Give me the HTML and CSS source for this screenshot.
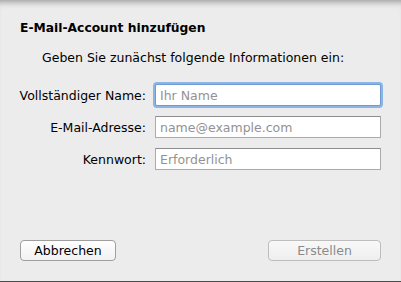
FILE: index.html
```html
<!DOCTYPE html>
<html lang="de">
<head>
    <meta charset="UTF-8">
    <title>E-Mail-Account hinzufügen</title>
    <link rel="stylesheet" href="styles.css">
</head>
<body>
    <div class="sheet">
        <h1 class="sheet-title">E-Mail-Account hinzufügen</h1>
        <p class="sheet-intro">Geben Sie zunächst folgende Informationen ein:</p>

        <form class="account-form">
            <label for="name">Vollständiger Name:</label>
            <input id="name" class="focused" type="text" placeholder="Ihr Name">

            <label for="mail">E-Mail-Adresse:</label>
            <input id="mail" type="text" placeholder="name@example.com">

            <label for="pass">Kennwort:</label>
            <input id="pass" type="password" placeholder="Erforderlich">
        </form>

        <div class="sheet-buttons">
            <button class="btn" type="button">Abbrechen</button>
            <button class="btn btn-primary" type="button" disabled>Erstellen</button>
        </div>
    </div>
</body>
</html>
```

FILE: styles.css
```css
* {
    margin: 0;
    padding: 0;
    box-sizing: border-box;
}

body {
    font-family: "DejaVu Sans", sans-serif;
    font-size: 12.5px;
    color: #000;
    background-color: #ececec;
}

/* Sheet */
.sheet {
    height: 282px;
    width: 401px;
    display: flex;
    flex-direction: column;
    background-color: #ececec;
    box-shadow: inset 0 7px 6px -5px rgba(0, 0, 0, 0.35);
    border-bottom: 1px solid #4a4a4a;
}

.sheet-title {
    font-size: 12.3px;
    font-weight: bold;
    margin: 21px 0 0 20px;
    line-height: 15px;
}

.sheet-intro {
    margin: 14px 0 0 42px;
    line-height: 15px;
}

/* Form */
.account-form {
    display: grid;
    grid-template-columns: 146px 226px;
    column-gap: 9px;
    row-gap: 10px;
    align-items: center;
    margin-top: 19px;
}

.account-form label {
    text-align: right;
    line-height: 15px;
}

.account-form input {
    height: 22px;
    border: 1px solid #a9a9a9;
    border-top-color: #8e8e8e;
    background-color: #fff;
    font-family: inherit;
    font-size: 12.5px;
    padding: 0 4px;
    outline: none;
}

.account-form input::placeholder {
    color: #929292;
}

.account-form input.focused {
    border-color: #6d9bd3;
    box-shadow: 0 0 0 2px #8db4e3;
    border-radius: 2px;
}

/* Buttons */
.sheet-buttons {
    margin-top: auto;
    margin-bottom: 20px;
    padding: 0 20px;
    display: flex;
    justify-content: space-between;
}

.btn {
    height: 21px;
    border: 1px solid #9f9f9f;
    border-radius: 4px;
    background: linear-gradient(#ffffff, #f1f1f1);
    font-family: inherit;
    font-size: 12.5px;
    color: #000;
    width: 96px;
}

.btn-primary {
    width: 113px;
}

.btn:disabled {
    color: #8a8a8a;
    border-color: #bdbdbd;
    background: linear-gradient(#f8f8f8, #efefef);
}
```
